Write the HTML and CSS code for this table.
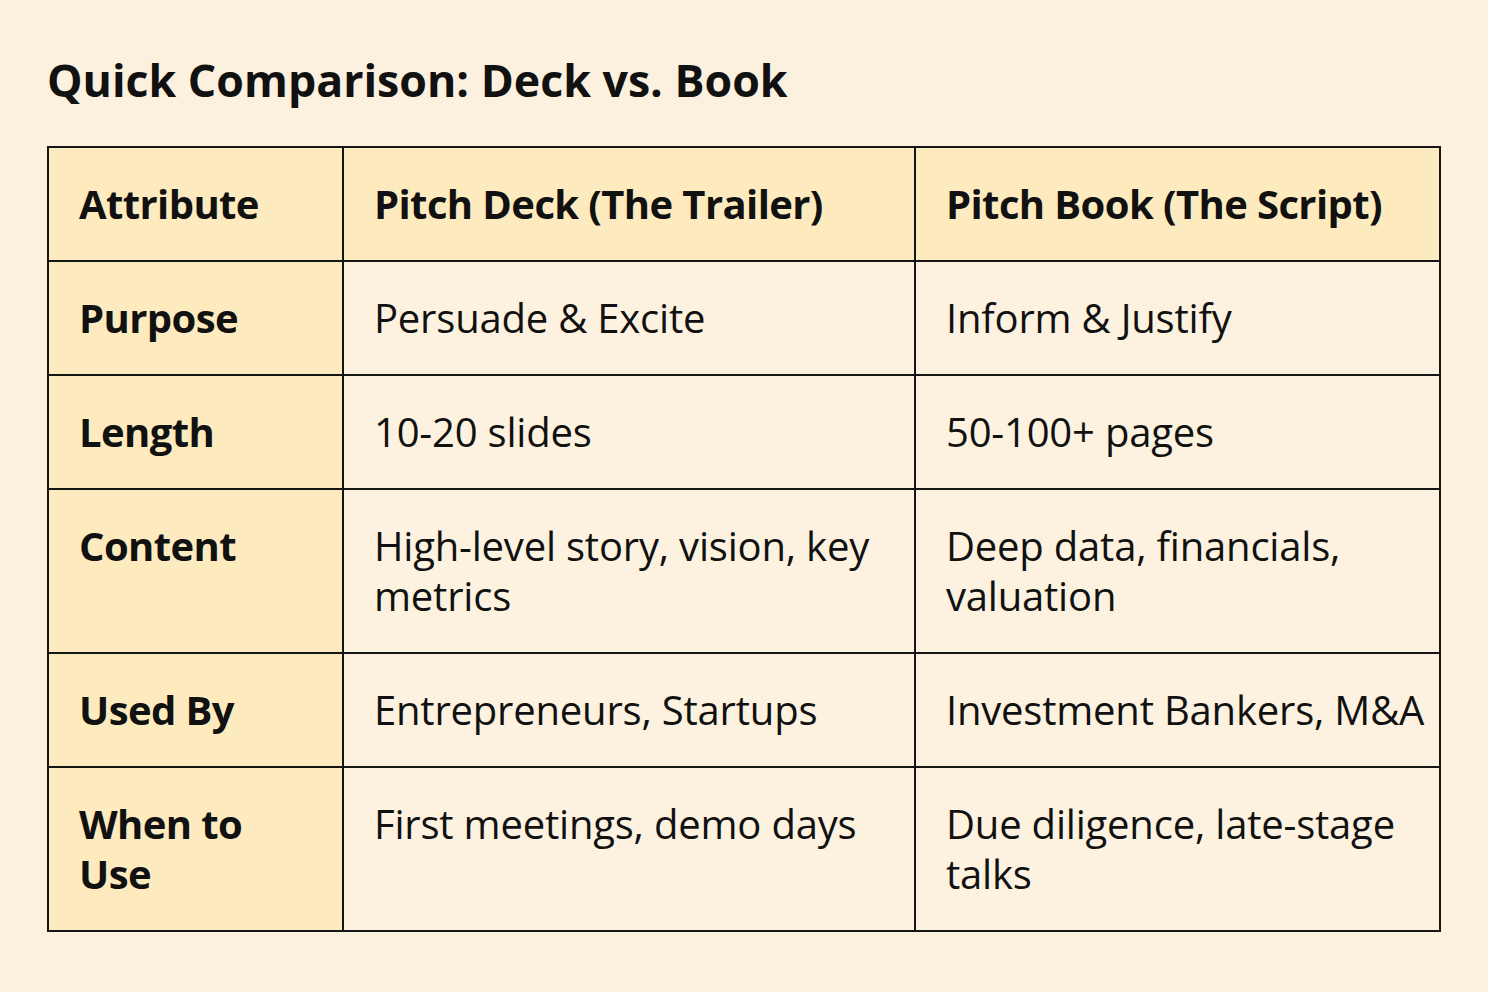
FILE: index.html
```html
<!DOCTYPE html>
<html lang="en">
<head>
<meta charset="utf-8">
<title>Quick Comparison: Deck vs. Book</title>
<link rel="stylesheet" href="styles.css">
</head>
<body>
<main class="page">
  <h1 class="title">Quick Comparison: Deck vs. Book</h1>
  <table class="compare">
    <colgroup>
      <col class="c1"><col class="c2"><col class="c3">
    </colgroup>
    <thead>
      <tr>
        <th>Attribute</th>
        <th>Pitch Deck (The Trailer)</th>
        <th>Pitch Book (The Script)</th>
      </tr>
    </thead>
    <tbody>
      <tr><th>Purpose</th><td>Persuade &amp; Excite</td><td>Inform &amp; Justify</td></tr>
      <tr><th>Length</th><td>10-20 slides</td><td>50-100+ pages</td></tr>
      <tr><th>Content</th><td>High-level story, vision, key metrics</td><td>Deep data, financials, valuation</td></tr>
      <tr><th>Used By</th><td>Entrepreneurs, Startups</td><td>Investment Bankers, M&amp;A</td></tr>
      <tr><th>When to Use</th><td>First meetings, demo days</td><td>Due diligence, late-stage talks</td></tr>
    </tbody>
  </table>
</main>
</body>
</html>
```

FILE: styles.css
```css
html, body {
  margin: 0;
  padding: 0;
}
body {
  background: #fcf1df;
  font-family: "Open Sans", "Noto Sans", sans-serif;
  color: #111111;
  width: 1488px;
  height: 992px;
  overflow: hidden;
}
.page {
  padding: 50px 0 0 47px;
}
.title {
  margin: 0 0 36px 0;
  font-size: 44.7px;
  line-height: 60px;
  font-weight: 700;
  letter-spacing: 0;
}
.compare {
  border-collapse: collapse;
  table-layout: fixed;
  width: 1392px;
  border: 2px solid #151515;
}
.c1 { width: 295px; }
.c2 { width: 572px; }
.c3 { width: 525px; }
.compare th,
.compare td {
  border: 2px solid #151515;
  padding: 31px 24px 31px 30px;
  font-size: 40px;
  line-height: 50px;
  text-align: left;
  vertical-align: top;
}
.compare th {
  font-weight: 700;
  background: #fdebbf;
  letter-spacing: -0.6px;
}
.compare td {
  font-weight: 400;
  background: #fdf2df;
  letter-spacing: -0.2px;
  padding-right: 2px;
}
```
